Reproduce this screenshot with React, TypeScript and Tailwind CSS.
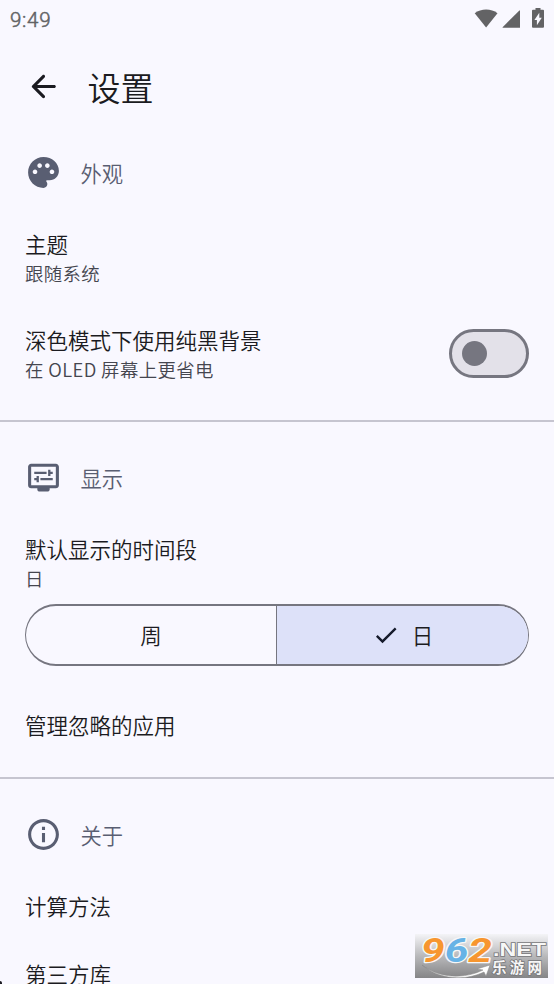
import React, { useState } from 'react';

interface SectionProps {
  icon: React.ReactNode;
  title: string;
}

interface RowTextProps {
  title: string;
  summary?: string;
}

const PaletteIcon = () => (
  <svg viewBox="0 0 24 24" className="h-[37px] w-[37px]" fill="currentColor">
    <path d="M12 2C6.49 2 2 6.49 2 12s4.49 10 10 10c1.38 0 2.5-1.12 2.5-2.5 0-.61-.23-1.2-.64-1.67-.08-.1-.13-.21-.13-.33 0-.28.22-.5.5-.5H16c3.31 0 6-2.69 6-6 0-4.96-4.49-9-10-9zM6.5 13c-.83 0-1.5-.67-1.5-1.5S5.67 10 6.5 10 8 10.67 8 11.5 7.33 13 6.5 13zm3-4C8.67 9 8 8.33 8 7.5S8.67 6 9.5 6s1.5.67 1.5 1.5S10.33 9 9.5 9zm5 0c-.83 0-1.5-.67-1.5-1.5S13.67 6 14.5 6s1.5.67 1.5 1.5S15.33 9 14.5 9zm3 4c-.83 0-1.5-.67-1.5-1.5s.67-1.5 1.5-1.5 1.5.67 1.5 1.5-.67 1.5-1.5 1.5z" />
  </svg>
);

const DisplayIcon = () => (
  <svg viewBox="0 0 24 24" className="h-[37px] w-[37px]" fill="currentColor">
    <path d="M20 3H4c-1.1 0-2 .9-2 2v12c0 1.1.9 2 2 2h4v1c0 .55.45 1 1 1h6c.55 0 1-.45 1-1v-1h4c1.1 0 2-.9 2-2V5c0-1.1-.9-2-2-2zm0 14H4V5h16v12z" />
    <path d="M6 8.25h8v1.5H6zM16.5 9.75H18v-1.5h-1.5V7H15v4h1.5zM10 12.25h8v1.5h-8zM7.5 15H9v-4H7.5v1.25H6v1.5h1.5z" />
  </svg>
);

const InfoIcon = () => (
  <svg viewBox="0 0 24 24" className="h-[37px] w-[37px]" fill="currentColor">
    <path d="M11 7h2v2h-2zm0 4h2v6h-2zm1-9C6.48 2 2 6.48 2 12s4.48 10 10 10 10-4.48 10-10S17.52 2 12 2zm0 18c-4.41 0-8-3.59-8-8s3.59-8 8-8 8 3.59 8 8-3.59 8-8 8z" />
  </svg>
);

const SectionHeader: React.FC<SectionProps> = ({ icon, title }) => (
  <div className="flex h-[71px] items-center pl-[24.5px] text-[#595e72]">
    <span className="pt-px">{icon}</span>
    <h2 className="ml-[19px] pt-0.5 text-[21.3px] leading-[30px]">{title}</h2>
  </div>
);

const RowText: React.FC<RowTextProps> = ({ title, summary }) => (
  <div>
    <div className="text-[21.5px] leading-[30px] text-[#1b1b21]">{title}</div>
    {summary && (
      <div className="text-[18.4px] leading-7 tracking-[0.4px] text-[#45464f]">{summary}</div>
    )}
  </div>
);

const StatusBar = () => (
  <div className="flex h-[38px] shrink-0 items-center justify-between pl-2.5 pr-[9px] text-[#636365]">
    <span className="pt-px font-[Roboto] text-[20.5px] leading-6 tracking-[0.7px] [-webkit-text-stroke:0.5px_#636365]">9:49</span>
    <svg viewBox="0 0 72 24" className="h-6 w-[72px]" fill="currentColor">
      <path d="M1.7 6.2C8 1.4 18.300 1.400 24.500 6.200L13.100 20.400Z" />
      <path d="M29.600 20.800V20.200L46.400 3.500H47V20.800Z" />
      <path d="M62.500 1h5v1.700H70q1 0 1 1V19.800q0 1-1 1H60q-1 0-1-1V3.700q0-1 1-1h2.500z" />
      <path d="M66.300 5.800v5h2.500l-4.900 7.500v-5.400h-2.500z" fill="#f9f8ff" />
    </svg>
  </div>
);

const Watermark = () => (
  <div className="absolute left-[415px] top-[934px] h-11 w-[133px] bg-gradient-to-b from-[#f4f4f7] via-[#b9b9bb] to-[#858587]">
    <svg viewBox="0 0 133 44" className="h-11 w-[133px]">
      <text x="6" y="28" textLength="71" lengthAdjust="spacingAndGlyphs" fontFamily="Roboto" fontWeight="700" fontStyle="italic" fontSize="33" stroke="#f7f7f7" strokeWidth="2.500" paintOrder="stroke" strokeLinejoin="round">
        <tspan fill="#f7962f">9</tspan>
        <tspan fill="#67b3e6">6</tspan>
        <tspan fill="#f7962f">2</tspan>
      </text>
      <path d="M7 31C25 45 50 45 68 36l-6-1 13-4-4 11-2-4C50 47 25 46 7 31z" fill="#fff" stroke="#888" strokeWidth=".5" />
      <g fill="#f7f7f7" stroke="#77777a" strokeWidth="1.500" paintOrder="stroke">
        <text x="78" y="22" fontFamily="Liberation Sans" fontSize="19" fontWeight="700" textLength="53" lengthAdjust="spacingAndGlyphs">.NET</text>
        <text x="77" y="39" fontFamily="Noto Sans CJK SC" fontSize="14.500" fontWeight="700" textLength="50">乐游网</text>
      </g>
    </svg>
  </div>
);

const App: React.FC = () => {
  const [pureBlack, setPureBlack] = useState(false);
  const [period, setPeriod] = useState<'week' | 'day'>('day');

  return (
    <div className="relative h-[984px] w-[554px] overflow-hidden bg-[#f9f8ff] font-['Noto_Sans_CJK_SC',sans-serif] [font-weight:350]">
      <StatusBar />

      <header className="flex h-[98px] items-center pl-[24.5px] text-[#1b1b21]">
        <button className="-mt-0.5">
          <svg viewBox="0 0 24 24" className="h-[37px] w-[37px]" fill="currentColor">
            <path d="M19 11H7.830l4.880-4.880c.39-.39.39-1.030 0-1.420-.39-.39-1.020-.39-1.410 0l-6.590 6.590c-.39.39-.39 1.020 0 1.410l6.590 6.590c.39.39 1.020.39 1.410 0 .39-.39.39-1.020 0-1.410L7.830 13H19c.55 0 1-.45 1-1s-.45-1-1-1z" />
          </svg>
        </button>
        <h1 className="ml-[26px] text-[33px] leading-10">设置</h1>
      </header>

      {/* Appearance */}
      <SectionHeader icon={<PaletteIcon />} title="外观" />
      <div className="h-[98px] px-[25px] pt-[22px]">
        <RowText title="主题" summary="跟随系统" />
      </div>
      <div className="flex h-[115px] items-start justify-between px-[25px] pt-5">
        <RowText title="深色模式下使用纯黑背景" summary="在 OLED 屏幕上更省电" />
        <button
          role="switch"
          aria-checked={pureBlack}
          onClick={() => setPureBlack(!pureBlack)}
          className={`mt-1 flex h-[49px] w-20 items-center rounded-full border-[3px] border-[#767680] bg-[#e3e1e9] px-[9.5px] ${pureBlack ? 'justify-end' : 'justify-start'}`}
        >
          <span className="h-[25px] w-[25px] rounded-full bg-[#767680]" />
        </button>
      </div>

      <hr className="border-t-2 border-[#c6c5d0]" />

      {/* Display */}
      <div className="pt-[19px]">
        <SectionHeader icon={<DisplayIcon />} title="显示" />
      </div>
      <div className="px-[25px] pt-[22px]">
        <RowText title="默认显示的时间段" summary="日" />
        <div className="mt-3 flex h-[62px] w-[504px] overflow-hidden rounded-full border-2 border-x-[1.5px] border-[#767680] text-[21.5px] text-[#1b1b21]">
          <button
            onClick={() => setPeriod('week')}
            className={`flex w-[251px] items-center justify-center border-r-[1.5px] border-[#767680] ${period === 'week' ? 'bg-[#dde1f9]' : ''}`}
          >
            周
          </button>
          <button
            onClick={() => setPeriod('day')}
            className={`flex flex-1 items-center justify-center gap-3 ${period === 'day' ? 'bg-[#dde1f9]' : ''}`}
          >
            {period === 'day' && (
              <svg viewBox="0 0 24 24" className="h-7 w-7" fill="#161b2c">
                <path d="M9 16.170L4.830 12l-1.420 1.410L9 19 21 7l-1.410-1.410z" />
              </svg>
            )}
            日
          </button>
        </div>
      </div>
      <div className="h-[111px] px-[25px] pt-11">
        <RowText title="管理忽略的应用" />
      </div>

      <hr className="border-t-2 border-[#c6c5d0]" />

      {/* About */}
      <div className="pt-[19px]">
        <SectionHeader icon={<InfoIcon />} title="关于" />
      </div>
      <div className="h-[68px] px-[25px] pt-[22px]">
        <RowText title="计算方法" />
      </div>
      <div className="px-[25px] pt-[22px]">
        <RowText title="第三方库" />
      </div>

      <Watermark />
      <span className="absolute bottom-0 left-0 h-[3px] w-0.5 rounded-tr-full bg-[#1b1b21]" />
    </div>
  );
};

export default App;
